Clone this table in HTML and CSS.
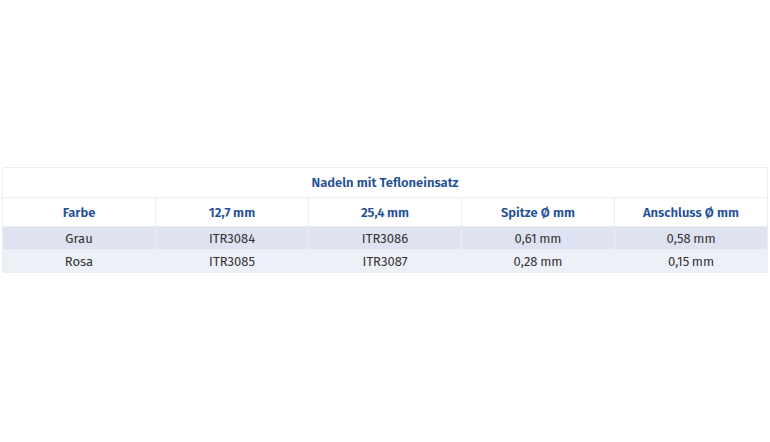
FILE: index.html
```html
<!DOCTYPE html>
<html lang="de">
<head>
<meta charset="utf-8">
<link rel="stylesheet" href="styles.css">
</head>
<body>
<div class="page">
  <table class="spec">
    <thead>
      <tr><th class="title" colspan="5">Nadeln mit Tefloneinsatz</th></tr>
      <tr class="head">
        <th>Farbe</th>
        <th>12,7&#8201;mm</th>
        <th>25,4&#8201;mm</th>
        <th>Spitze Ø mm</th>
        <th>Anschluss Ø mm</th>
      </tr>
    </thead>
    <tbody>
      <tr class="odd">
        <td>Grau</td><td>ITR3084</td><td>ITR3086</td><td>0,61&#8201;mm</td><td>0,58&#8201;mm</td>
      </tr>
      <tr class="even">
        <td>Rosa</td><td>ITR3085</td><td>ITR3087</td><td>0,28&#8201;mm</td><td>0,15&#8201;mm</td>
      </tr>
    </tbody>
  </table>
</div>
</body>
</html>
```

FILE: styles.css
```css
html, body {
  margin: 0;
  padding: 0;
  background: #ffffff;
}
.page {
  padding: 167px 2px 0 2px;
}
.spec {
  width: 766px;
  border-collapse: collapse;
  table-layout: fixed;
  font-family: "Fira Sans", "Noto Sans", "Open Sans", sans-serif;
  font-size: 13px;
  color: #333;
}
.spec th, .spec td {
  border: 1px solid #ececf2;
  text-align: center;
  padding: 0;
}
.spec th {
  color: #1f4f96;
  font-weight: 600;
}
.spec .title {
  height: 29px;
}
.spec .head th {
  height: 28px;
}
.spec td {
  height: 22px;
}
.spec .odd td {
  background: #dfe2f1;
}
.spec .even td {
  background: #eef0f8;
}
```
